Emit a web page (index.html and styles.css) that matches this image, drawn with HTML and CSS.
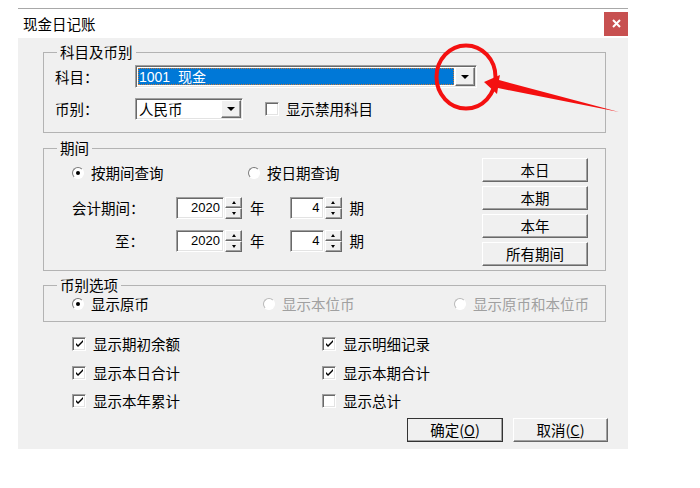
FILE: index.html
```html
<!DOCTYPE html>
<html lang="zh-CN">
<head>
  <meta charset="UTF-8">
  <meta name="viewport" content="width=device-width, initial-scale=1.0">
  <title>现金日记账</title>
  <link rel="stylesheet" href="styles.css">
</head>
<body>

  <div class="window">
    <div class="titlebar">
      <span class="title">现金日记账</span>
      <button class="close-btn">
        <svg width="9" height="9" viewBox="0 0 9 9"><path d="M1 1 L8 8 M8 1 L1 8" stroke="#fff" stroke-width="2"/></svg>
      </button>
    </div>

    <div class="client">
      <!-- 科目及币别 -->
      <fieldset class="group group-account">
        <legend>科目及币别</legend>
        <div class="field-row">
          <span class="field-label">科目：</span>
          <div class="combo combo-account">
            <div class="combo-text selected"><span class="focus-rect">1001&nbsp;&nbsp;现金</span></div>
            <span class="drop-btn"><i class="tri-down"></i></span>
          </div>
        </div>
        <div class="field-row row-currency">
          <span class="field-label">币别：</span>
          <div class="combo combo-currency">
            <div class="combo-text">人民币</div>
            <span class="drop-btn"><i class="tri-down"></i></span>
          </div>
          <label class="check check-disabled-acct"><span class="box"></span>显示禁用科目</label>
        </div>
      </fieldset>

      <!-- 期间 -->
      <fieldset class="group group-period">
        <legend>期间</legend>
        <div class="period-body">
          <div class="period-left">
            <div class="radio-row">
              <label class="radio-item period-radio"><span class="radio checked"></span>按期间查询</label>
              <label class="radio-item"><span class="radio"></span>按日期查询</label>
            </div>
            <div class="spin-row first">
              <span class="spin-label">会计期间：</span>
              <div class="num-input year">2020</div>
              <div class="spin"><span><i class="tri-up"></i></span><span><i class="tri-down small"></i></span></div>
              <span class="unit">年</span>
              <div class="num-input month">4</div>
              <div class="spin"><span><i class="tri-up"></i></span><span><i class="tri-down small"></i></span></div>
              <span class="unit">期</span>
            </div>
            <div class="spin-row second">
              <span class="spin-label">至：</span>
              <div class="num-input year">2020</div>
              <div class="spin"><span><i class="tri-up"></i></span><span><i class="tri-down small"></i></span></div>
              <span class="unit">年</span>
              <div class="num-input month">4</div>
              <div class="spin"><span><i class="tri-up"></i></span><span><i class="tri-down small"></i></span></div>
              <span class="unit">期</span>
            </div>
          </div>
          <div class="period-buttons">
            <button class="win-btn">本日</button>
            <button class="win-btn">本期</button>
            <button class="win-btn">本年</button>
            <button class="win-btn">所有期间</button>
          </div>
        </div>
      </fieldset>

      <!-- 币别选项 -->
      <fieldset class="group group-currency-opt">
        <legend>币别选项</legend>
        <div class="radio-row currency-radios">
          <label class="radio-item"><span class="radio checked"></span>显示原币</label>
          <label class="radio-item disabled"><span class="radio"></span>显示本位币</label>
          <label class="radio-item disabled"><span class="radio"></span>显示原币和本位币</label>
        </div>
      </fieldset>

      <div class="options">
        <label class="check"><span class="box checked"></span>显示期初余额</label>
        <label class="check"><span class="box checked"></span>显示明细记录</label>
        <label class="check"><span class="box checked"></span>显示本日合计</label>
        <label class="check"><span class="box checked"></span>显示本期合计</label>
        <label class="check"><span class="box checked"></span>显示本年累计</label>
        <label class="check"><span class="box"></span>显示总计</label>
      </div>

      <div class="footer">
        <button class="win-btn default">确定(<u>O</u>)</button>
        <button class="win-btn">取消(<u>C</u>)</button>
      </div>
    </div>
  </div>

  <!-- red annotation drawn over the screenshot -->
  <svg class="annotation" width="700" height="488" viewBox="0 0 700 488">
    <ellipse cx="466" cy="77" rx="29.5" ry="31.5" fill="none" stroke="#f41010" stroke-width="4"/>
    <polygon points="484,82 500,75 499,80 619,112 498,88 497,94" fill="#f41010"/>
  </svg>

</body>
</html>
```

FILE: styles.css
```css
body {
  margin: 0;
  background-color: #fff;
  font-family: "Noto Sans CJK SC", "Noto Sans", sans-serif;
  font-size: 14.5px;
  line-height: 18px;
  color: #000;
  position: relative;
  width: 700px;
  height: 488px;
  overflow: hidden;
}

.window {
  margin: 8px 0 0 18px;
  width: 610px;
}

.titlebar {
  height: 29px;
  border-top: 1px solid #a8a8a8;
  background-color: #fff;
  display: flex;
  align-items: center;
  justify-content: space-between;
}

.title {
  padding-left: 5px;
}

.close-btn {
  width: 24px;
  height: 24px;
  padding: 0;
  border: none;
  background-color: #c75050;
  display: flex;
  align-items: center;
  justify-content: center;
}

.client {
  background-color: #f0f0f0;
  padding: 5px 22px 7px 25px;
}

/* group boxes */
.group {
  margin: 0;
  padding: 4px 17px 12px 11px;
  border: 1px solid #b3b3b3;
  min-width: 0;
}

.group legend {
  padding: 0 3px;
  margin-left: 2px;
  line-height: 18px;
}

.group-period {
  margin-top: 6px;
  padding-top: 1px;
  padding-bottom: 4px;
}

.group-currency-opt {
  margin-top: 5px;
  padding-top: 1px;
  padding-bottom: 8px;
}

/* sunken / raised frames */
.combo,
.num-input,
.box {
  background-color: #fff;
  border: 1px solid;
  border-color: #a0a0a0 #fff #fff #a0a0a0;
  box-shadow: inset 1px 1px 0 #696969, inset -1px -1px 0 #e3e3e3;
  box-sizing: border-box;
}

.drop-btn,
.spin span,
.win-btn {
  background-color: #f0f0f0;
  border: 1px solid;
  border-color: #fff #696969 #696969 #fff;
  box-shadow: inset -1px -1px 0 #a0a0a0;
  box-sizing: border-box;
}

/* combo boxes */
.field-row {
  display: flex;
  align-items: center;
  height: 23px;
}

.field-label {
  width: 80px;
}

.row-currency {
  margin-top: 10px;
  height: 22px;
}

.combo {
  display: flex;
  align-items: stretch;
  padding: 2px;
  height: 100%;
}

.combo-account {
  width: 342px;
}

.combo-currency {
  width: 108px;
}

.combo-text {
  flex: 1;
  display: flex;
  align-items: center;
  padding-left: 1px;
  font-size: 14.5px;
}

.combo-text.selected {
  background-color: #0078d7;
  color: #fff;
  border: 1px dotted #c87a3a;
  padding-left: 0;
  margin-right: 1px;
}

.focus-rect {
  font-family: "Liberation Sans", "Noto Sans CJK SC", sans-serif;
  font-size: 14px;
}

.drop-btn {
  width: 20px;
  margin: -1px -1px -1px 0;
  display: flex;
  align-items: center;
  justify-content: center;
}

.tri-down {
  width: 0;
  height: 0;
  border-left: 4px solid transparent;
  border-right: 4px solid transparent;
  border-top: 4px solid #000;
}

.tri-down.small {
  border-left-width: 2.5px;
  border-right-width: 2.5px;
  border-top-width: 3px;
}

.tri-up {
  width: 0;
  height: 0;
  border-left: 2.5px solid transparent;
  border-right: 2.5px solid transparent;
  border-bottom: 3px solid #000;
}

/* check boxes */
.check {
  display: flex;
  align-items: center;
  height: 18px;
  white-space: nowrap;
}

.box {
  width: 14px;
  height: 14px;
  margin-right: 7px;
  position: relative;
  flex: none;
}

.box.checked::after {
  content: "";
  position: absolute;
  left: 3px;
  top: 2px;
  width: 7px;
  height: 7px;
  background: no-repeat center / 7px 7px url("data:image/svg+xml;utf8,<svg xmlns='http://www.w3.org/2000/svg' width='7' height='7' viewBox='0 0 7 7'><path d='M0 3 L0 5 L2 7 L7 2 L7 0 L2 5 Z' fill='black'/></svg>");
}

.check-disabled-acct {
  margin-left: 22px;
}

/* radio buttons */
.radio-row {
  display: flex;
  align-items: center;
  height: 18px;
  margin-left: 17px;
}

.radio-item {
  display: flex;
  align-items: center;
  white-space: nowrap;
  flex: none;
}

.radio {
  width: 12px;
  height: 12px;
  border-radius: 50%;
  border: 1px solid;
  border-color: #7a7a7a #fff #fff #7a7a7a;
  background-color: #fff;
  box-sizing: border-box;
  margin-right: 7px;
  position: relative;
  flex: none;
}

.radio.checked::after {
  content: "";
  position: absolute;
  left: 3px;
  top: 3px;
  width: 4px;
  height: 4px;
  border-radius: 50%;
  background-color: #000;
}

.radio-item.disabled {
  color: #a0a0a0;
}

.radio-item.disabled .radio {
  border-color: #b8b8b8 #fff #fff #b8b8b8;
}

.period-radio {
  width: 176px;
}

.currency-radios .radio-item {
  width: 191px;
}

/* period group */
.period-body {
  display: flex;
}

.period-left {
  flex: 1;
}

.period-left .radio-row {
  margin-top: 6px;
}

.spin-row {
  display: flex;
  align-items: center;
  height: 22px;
  margin-left: 17px;
}

.spin-row.first {
  margin-top: 15px;
}

.spin-row.second {
  margin-top: 11px;
}

.spin-label {
  width: 72px;
  text-align: right;
  white-space: nowrap;
}

.num-input {
  height: 22px;
  text-align: right;
  padding: 0 3px 0 0;
  font-family: "Liberation Sans", sans-serif;
  font-size: 13px;
  line-height: 20px;
}

.num-input.year {
  width: 48px;
  margin-left: 32px;
}

.num-input.month {
  width: 34px;
  margin-left: 25px;
}

.spin {
  display: flex;
  flex-direction: column;
  width: 17px;
  height: 22px;
  margin-left: 1px;
}

.spin span {
  flex: 1;
  display: flex;
  align-items: center;
  justify-content: center;
}

.unit {
  margin-left: 8px;
}

.period-buttons {
  width: 106px;
  display: flex;
  flex-direction: column;
  gap: 4px;
}

.win-btn {
  height: 24px;
  padding: 0;
  font-family: inherit;
  font-size: 14.5px;
  line-height: 18px;
  color: #000;
}

/* option check boxes */
.options {
  display: grid;
  grid-template-columns: 250px 200px;
  row-gap: 10.5px;
  margin: 13px 0 0 29px;
}

/* dialog buttons */
.footer {
  display: flex;
  justify-content: flex-end;
  gap: 10px;
  margin: 8px -2px 0 0;
}

.footer .win-btn {
  width: 95px;
}

.win-btn.default {
  width: 96px;
  outline: 1px solid #333;
  outline-offset: -1px;
}

.win-btn u {
  text-decoration: underline;
}

.annotation {
  position: absolute;
  left: 0;
  top: 0;
  pointer-events: none;
}
```
